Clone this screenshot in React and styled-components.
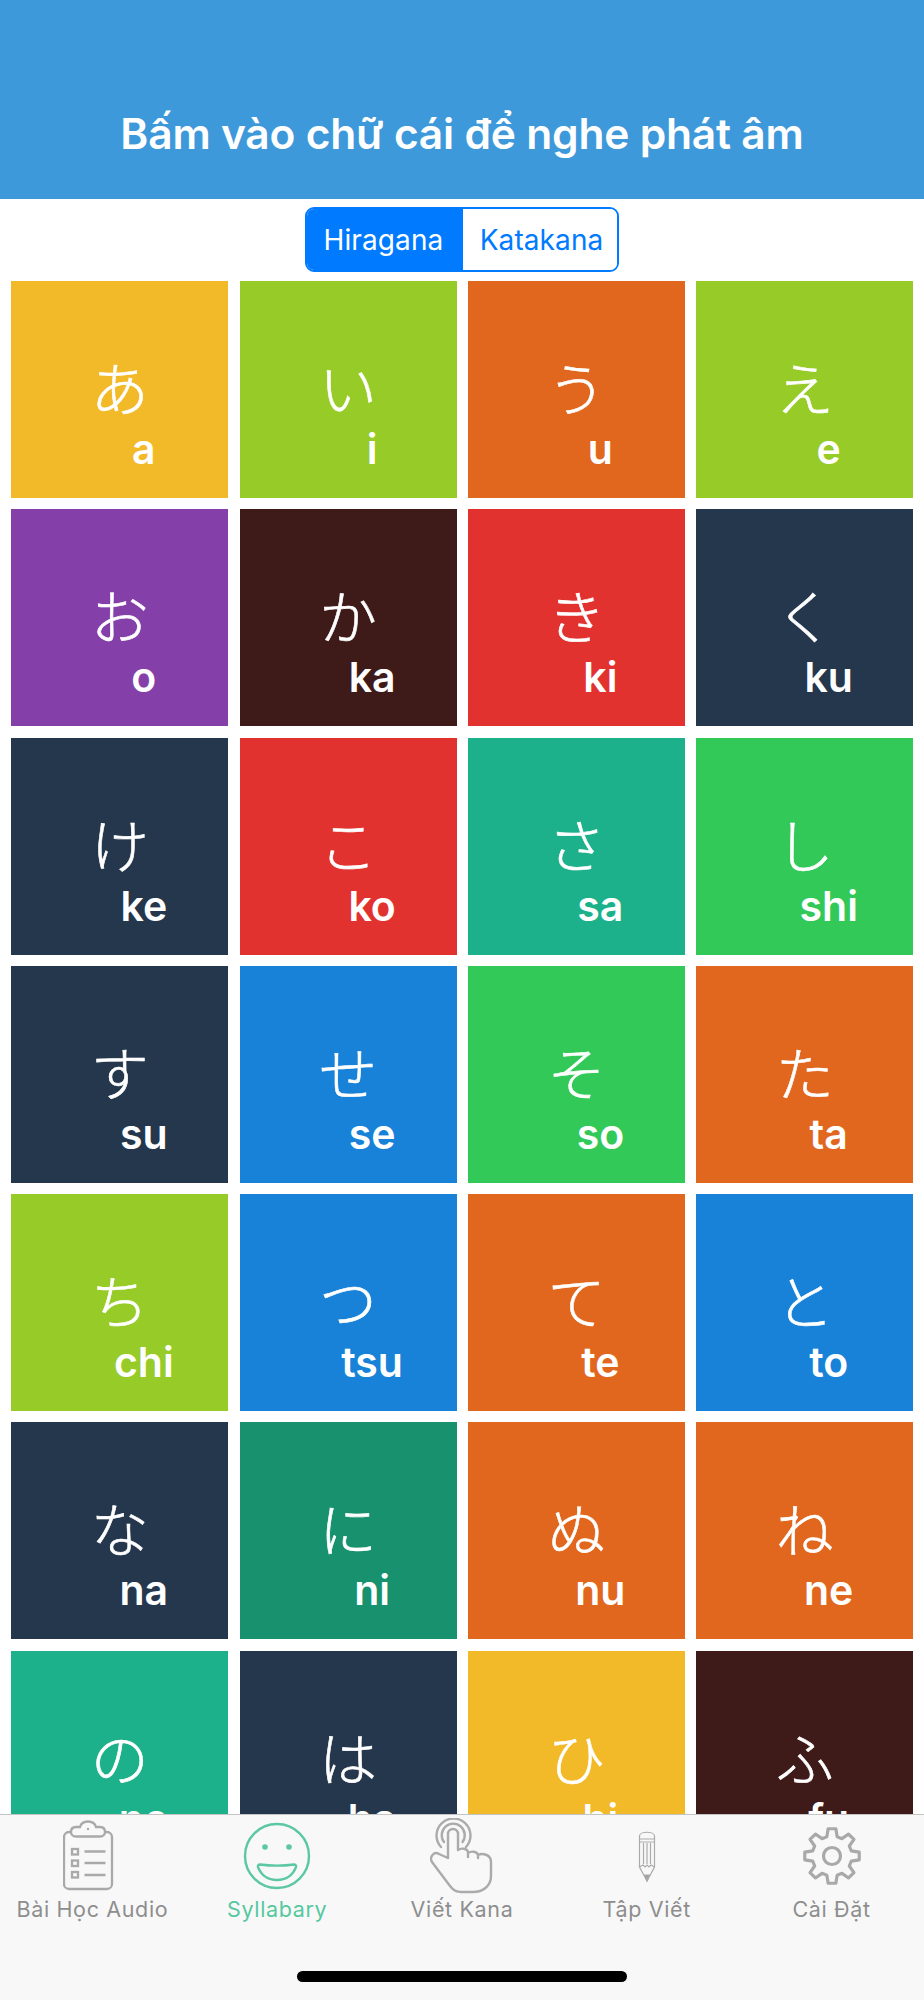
import React from "react";
import styled, { createGlobalStyle } from "styled-components";

const Global = createGlobalStyle`
  html, body { margin: 0; padding: 0; background: #fff; }
  body { font-family: Inter, "Liberation Sans", sans-serif; }
`;
const Page = styled.div`
  width: 924px; height: 2000px; display: flex; flex-direction: column; overflow: hidden; background: #fff;
`;
const Header = styled.header`
  height: 199px; flex: none; background: #3e99db; display: flex; align-items: flex-end; justify-content: center; padding-bottom: 40px; box-sizing: border-box;
`;
const Title = styled.h1`
  margin: 0; color: #fff; font-size: 42.5px; font-weight: 600; line-height: 50px; letter-spacing: -0.2px;
`;
const SegmentRow = styled.div`
  flex: none; display: flex; justify-content: center; padding: 8px 0 9px;
`;
const Segment = styled.div`
  display: flex; width: 314px; height: 65px; box-sizing: border-box; border: 2px solid #007aff; border-radius: 9px; overflow: hidden;
`;
const SegmentItem = styled.div`
  flex: none; display: flex; align-items: center; justify-content: center; box-sizing: border-box; height: 100%;
  width: ${p => (p.$active ? 156 : 154)}px; font-size: 28px; letter-spacing: 0.1px;
  padding: ${p => (p.$active ? "0 3px 0 0" : "0 0 0 3px")};
  background: ${p => (p.$active ? "#007aff" : "#fff")}; color: ${p => (p.$active ? "#fff" : "#007aff")};
`;
const Scroll = styled.div`
  flex: 1; min-height: 0; overflow: hidden; padding: 0 10.7px 0 11.3px;
`;
const Grid = styled.div`
  display: grid; grid-template-columns: repeat(4, 217px); column-gap: 11.3px; row-gap: 11.3px; grid-auto-rows: 217px;
`;
const Tile = styled.div`
  background: ${p => p.$bg}; display: flex; flex-direction: column; align-items: center; color: #fff; padding-top: 67px; box-sizing: border-box;
`;
const Kana = styled.div`
  font-family: "Noto Sans CJK JP", sans-serif; font-weight: 300; font-size: 58px; line-height: 76px; -webkit-text-stroke: 0.6px #fff;
`;
const Romaji = styled.div`
  font-size: 41px; font-weight: 600; line-height: 46px; margin-left: 48px; margin-top: 2px;
`;
const TabBar = styled.nav`
  flex: none; height: 186px; box-sizing: border-box; background: #f8f8f8; border-top: 1px solid #c4c4c4; position: relative; display: grid; grid-template-columns: repeat(5, 1fr); align-items: start;
`;
const Tab = styled.div`
  display: flex; flex-direction: column; align-items: center; color: ${p => (p.$active ? "#55c8a0" : "#8e8e8e")};
`;
const IconBox = styled.div`
  height: 81px; display: flex; align-items: center; justify-content: center;
`;
const TabLabel = styled.div`
  font-size: 21.5px; line-height: 26px; letter-spacing: 0.65px; white-space: nowrap;
`;
const HomeBar = styled.div`
  position: absolute; left: 297px; top: 156px; width: 330px; height: 11px; border-radius: 6px; background: #000;
`;

const ClipboardIcon = () => (
  <svg width="58" height="71" viewBox="0 0 58 71" fill="none" stroke="#a9a9a9" strokeWidth="2.300">
    <path d="M11 12H6a5 5 0 0 0-5 5v47a5 5 0 0 0 5 5h38a5 5 0 0 0 5-5V17a5 5 0 0 0-5-5h-5" />
    <path d="M13 16.500h24c3.500 0 5-2.500 5-4.500 0-3-2-5-5-5h-4c-1-3.500-4-5.500-8-5.500s-7 2-8 5.500h-4c-3 0-5 2-5 5 0 2 1.500 4.500 5 4.500z" fill="#f8f8f8" />
    <circle cx="25" cy="9" r="1.200" fill="#a9a9a9" stroke="none" />
    <rect x="9" y="29" width="6" height="5.500" /><rect x="9" y="40.500" width="6" height="5.500" /><rect x="9" y="52" width="6" height="5.500" />
    <path d="M21.500 31.500h21M21.500 43h21M21.500 55h21" />
  </svg>
);
const SmileIcon = () => (
  <svg width="68" height="68" viewBox="0 0 68 68" fill="none" stroke="#5bc8a2" strokeWidth="2.400">
    <circle cx="34" cy="34" r="32" />
    <circle cx="22" cy="25" r="2.800" fill="#5bc8a2" stroke="none" /><circle cx="46" cy="25" r="2.800" fill="#5bc8a2" stroke="none" />
    <path d="M17 42.500c-1.500 0-2.500 1-2 2.500 3 8 10 13 19 13s16-5 19-13c.5-1.500-.5-2.500-2-2.500-11 1.500-23 1.500-34 0z" />
  </svg>
);
const HandIcon = () => (
  <svg width="64" height="76" viewBox="22 6 64 76" fill="none" stroke="#ababab" strokeWidth="2.400" strokeLinecap="round" strokeLinejoin="round">
    <path d="M33 35a17 17 0 1 1 25 0" /><path d="M36 30a11.500 11.500 0 1 1 18.500 0" />
    <path d="M40 46V22a5 5 0 0 1 10 0v16c3-2 9-2 10 2v5M60 41c3-2 9-2 10 2v3M70 43c4-2 13-1 13 7v14c0 10-8 16-18 16H53c-5 0-8-2-11-6L24 50c-3-5 2-11 7-8l9 4" />
  </svg>
);
const PencilIcon = () => (
  <svg width="18" height="52" viewBox="0 0 18 52" fill="none" stroke="#ababab" strokeWidth="1.200">
    <path d="M1.500 37V6c0-5 15-5 15 0v31L9 51z" />
    <path d="M1.500 9h15M1.500 12h15M1.500 37l3.500-2 2 2 2-2 2 2 2-2 3.500 2M5.500 13v21M9 13v21M12.500 13v21" />
    <path d="M6.500 45l2.500 6 2.500-6z" fill="#a0a0a0" />
  </svg>
);
const gearPath = (() => {
  const pt = (r, deg) => {
    const a = (deg - 90) * Math.PI / 180;
    return `${(31 + r * Math.cos(a)).toFixed(2)} ${(30 + r * Math.sin(a)).toFixed(2)}`;
  };
  let d = "";
  for (let i = 0; i < 8; i++) {
    const c = i * 45;
    d += `${i ? "L" : "M"}${pt(20, c - 15)}L${pt(27.5, c - 8)}L${pt(27.5, c + 8)}L${pt(20, c + 15)}`;
  }
  return d + "Z";
})();
const GearIcon = () => (
  <svg width="62" height="60" viewBox="0 0 62 60" fill="none" stroke="#a9a9a9" strokeWidth="3.200" strokeLinejoin="round">
    <circle cx="31" cy="30" r="8.500" />
    <path d={gearPath} />
  </svg>
);

const Y = "#f2b929", G = "#96cb28", O = "#e2671e", P = "#8440a8", B = "#3e1a19", R = "#e2322f", N = "#25374c", T = "#1cb18a", L = "#32c958", U = "#1782d8", D = "#18916f";
const rows = [
  ["あ", "a", Y], ["い", "i", G], ["う", "u", O], ["え", "e", G],
  ["お", "o", P], ["か", "ka", B], ["き", "ki", R], ["く", "ku", N],
  ["け", "ke", N], ["こ", "ko", R], ["さ", "sa", T], ["し", "shi", L],
  ["す", "su", N], ["せ", "se", U], ["そ", "so", L], ["た", "ta", O],
  ["ち", "chi", G], ["つ", "tsu", U], ["て", "te", O], ["と", "to", U],
  ["な", "na", N], ["に", "ni", D], ["ぬ", "nu", O], ["ね", "ne", O],
  ["の", "no", T], ["は", "ha", N], ["ひ", "hi", Y], ["ふ", "fu", B],
];
const tabs = [
  ["Bài Học Audio", <ClipboardIcon />], ["Syllabary", <SmileIcon />, true], ["Viết Kana", <HandIcon />], ["Tập Viết", <PencilIcon />], ["Cài Đặt", <GearIcon />],
];

export default function App() {
  return (
    <Page>
      <Global />
      <Header><Title>Bấm vào chữ cái để nghe phát âm</Title></Header>
      <SegmentRow>
        <Segment>
          <SegmentItem $active>Hiragana</SegmentItem>
          <SegmentItem>Katakana</SegmentItem>
        </Segment>
      </SegmentRow>
      <Scroll>
        <Grid>
          {rows.map(([k, r, c]) => (
            <Tile key={r} $bg={c}><Kana>{k}</Kana><Romaji>{r}</Romaji></Tile>
          ))}
        </Grid>
      </Scroll>
      <TabBar>
        {tabs.map(([label, icon, active]) => (
          <Tab key={label} $active={active}>
            <IconBox>{icon}</IconBox>
            <TabLabel>{label}</TabLabel>
          </Tab>
        ))}
        <HomeBar />
      </TabBar>
    </Page>
  );
}
